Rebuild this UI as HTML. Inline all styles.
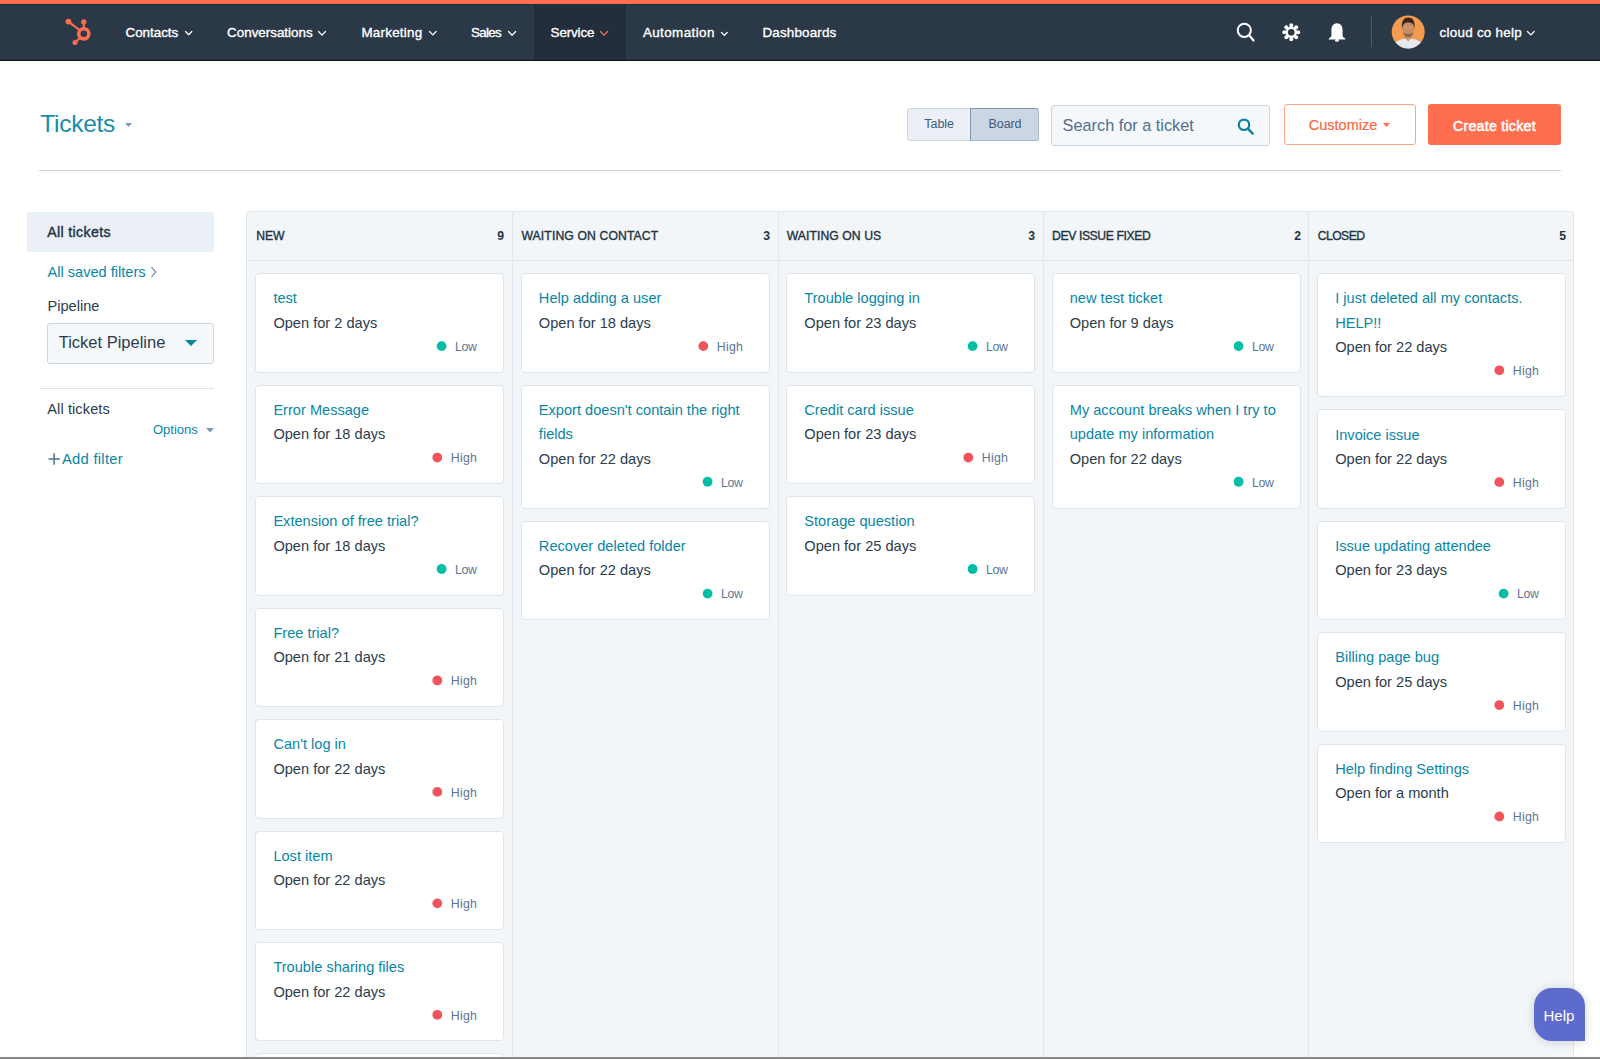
<!DOCTYPE html>
<html><head><meta charset="utf-8">
<style>
*{box-sizing:border-box;margin:0;padding:0}
html,body{width:1600px;height:1059px;overflow:hidden;background:#fff;font-family:"Liberation Sans",sans-serif;color:#33475b}
.a{position:absolute;white-space:nowrap}
.card{background:#fff;border:1px solid #e0e5eb;border-radius:4px}
</style></head><body>
<div class="a" style="left:0px;top:0px;width:1600px;height:3.5px;background:#ff6f4f"></div>
<div class="a" style="left:0px;top:3.5px;width:1600px;height:1px;background:#1f3344"></div>
<div class="a" style="left:0px;top:4.5px;width:1600px;height:55.5px;background:#2b3848"></div>
<div class="a" style="left:534px;top:4.5px;width:91.5px;height:55.5px;background:#222e3c"></div>
<div class="a" style="left:0px;top:60px;width:1600px;height:1px;background:#0d1218"></div>
<svg class="a" style="left:60px;top:14px" width="40" height="36" viewBox="60 14 40 36">
<g fill="#ff6f4f" stroke="none">
<circle cx="68.4" cy="21.6" r="2.9"/>
<circle cx="83.8" cy="21.9" r="2.6"/>
<circle cx="75" cy="42.5" r="2.5"/>
</g>
<g fill="none" stroke="#ff6f4f">
<circle cx="83.8" cy="33.8" r="5.1" stroke-width="3.6"/>
<line x1="68.4" y1="21.6" x2="79.5" y2="30" stroke-width="2"/>
<line x1="83.8" y1="21.9" x2="83.8" y2="28.5" stroke-width="2"/>
<line x1="75" y1="42.5" x2="80" y2="37.8" stroke-width="2"/>
</g></svg>
<span class="a" style="left:125.50px;top:26.06px;font-size:13.4px;line-height:13.4px;color:#fff;font-weight:400;-webkit-text-stroke:0.35px #fff;letter-spacing:-0.011px;">Contacts</span>
<svg class="a" style="left:183.60000000000002px;top:30.49px" width="9.30" height="6.01" viewBox="-1 -1 9.30 6.01"><path d="M0.5 0.5 L3.65 3.71 L6.80 0.5" fill="none" stroke="#fff" stroke-width="1.25" stroke-linecap="round" stroke-linejoin="round"/></svg>
<span class="a" style="left:227.10px;top:26.06px;font-size:13.4px;line-height:13.4px;color:#fff;font-weight:400;-webkit-text-stroke:0.35px #fff;letter-spacing:-0.004px;">Conversations</span>
<svg class="a" style="left:317.3px;top:30.30px" width="10.00" height="6.40" viewBox="-1 -1 10.00 6.40"><path d="M0.5 0.5 L4.00 4.10 L7.50 0.5" fill="none" stroke="#fff" stroke-width="1.25" stroke-linecap="round" stroke-linejoin="round"/></svg>
<span class="a" style="left:361.40px;top:26.06px;font-size:13.4px;line-height:13.4px;color:#fff;font-weight:400;-webkit-text-stroke:0.35px #fff;letter-spacing:0.245px;">Marketing</span>
<svg class="a" style="left:428.0px;top:30.41px" width="9.60" height="6.18" viewBox="-1 -1 9.60 6.18"><path d="M0.5 0.5 L3.80 3.88 L7.10 0.5" fill="none" stroke="#fff" stroke-width="1.25" stroke-linecap="round" stroke-linejoin="round"/></svg>
<span class="a" style="left:471.00px;top:26.06px;font-size:13.4px;line-height:13.4px;color:#fff;font-weight:400;-webkit-text-stroke:0.35px #fff;letter-spacing:-0.678px;">Sales</span>
<svg class="a" style="left:507.0px;top:30.24px" width="10.20" height="6.51" viewBox="-1 -1 10.20 6.51"><path d="M0.5 0.5 L4.10 4.21 L7.70 0.5" fill="none" stroke="#fff" stroke-width="1.25" stroke-linecap="round" stroke-linejoin="round"/></svg>
<span class="a" style="left:550.60px;top:26.06px;font-size:13.4px;line-height:13.4px;color:#fff;font-weight:400;-webkit-text-stroke:0.35px #fff;letter-spacing:-0.132px;">Service</span>
<svg class="a" style="left:598.6999999999999px;top:30.27px" width="10.10" height="6.46" viewBox="-1 -1 10.10 6.46"><path d="M0.5 0.5 L4.05 4.16 L7.60 0.5" fill="none" stroke="#ff6f4f" stroke-width="1.25" stroke-linecap="round" stroke-linejoin="round"/></svg>
<span class="a" style="left:642.90px;top:26.06px;font-size:13.4px;line-height:13.4px;color:#fff;font-weight:400;-webkit-text-stroke:0.35px #fff;letter-spacing:0.412px;">Automation</span>
<svg class="a" style="left:720.0px;top:30.66px" width="8.70" height="5.69" viewBox="-1 -1 8.70 5.69"><path d="M0.5 0.5 L3.35 3.39 L6.20 0.5" fill="none" stroke="#fff" stroke-width="1.25" stroke-linecap="round" stroke-linejoin="round"/></svg>
<span class="a" style="left:762.50px;top:26.06px;font-size:13.4px;line-height:13.4px;color:#fff;font-weight:400;-webkit-text-stroke:0.35px #fff;letter-spacing:0.172px;">Dashboards</span>
<span class="a" style="left:1439.60px;top:26.06px;font-size:13.4px;line-height:13.4px;color:#fff;font-weight:400;-webkit-text-stroke:0.35px #fff;letter-spacing:0.261px;">cloud co help</span>
<svg class="a" style="left:1526.3px;top:30.38px" width="9.70" height="6.24" viewBox="-1 -1 9.70 6.24"><path d="M0.5 0.5 L3.85 3.94 L7.20 0.5" fill="none" stroke="#fff" stroke-width="1.25" stroke-linecap="round" stroke-linejoin="round"/></svg>
<svg class="a" style="left:1230px;top:16px" width="30" height="30" viewBox="1230 16 30 30">
<circle cx="1244.3" cy="30.3" r="6.6" fill="none" stroke="#fff" stroke-width="2"/>
<line x1="1249" y1="35" x2="1253.5" y2="40.5" stroke="#fff" stroke-width="2.2" stroke-linecap="round"/></svg>
<svg class="a" style="left:1278px;top:19px" width="26" height="26" viewBox="1278 19 26 26">
<g fill="#fff"><circle cx="1298.25" cy="32.25" r="1.95"/><circle cx="1296.20" cy="37.20" r="1.95"/><circle cx="1291.25" cy="39.25" r="1.95"/><circle cx="1286.30" cy="37.20" r="1.95"/><circle cx="1284.25" cy="32.25" r="1.95"/><circle cx="1286.30" cy="27.30" r="1.95"/><circle cx="1291.25" cy="25.25" r="1.95"/><circle cx="1296.20" cy="27.30" r="1.95"/></g>
<circle cx="1291.25" cy="32.25" r="4.6" fill="none" stroke="#fff" stroke-width="2.5"/></svg>
<svg class="a" style="left:1326px;top:20px" width="22" height="24" viewBox="1326 20 22 24">
<path fill="#fff" d="M1337 23.2 C1332.6 23.2 1331.4 27 1331.4 30.5 L1331.4 35.5 C1331.4 36.8 1330.2 37.6 1328.8 38.4 L1328.8 39.4 L1345.2 39.4 L1345.2 38.4 C1343.8 37.6 1342.6 36.8 1342.6 35.5 L1342.6 30.5 C1342.6 27 1341.4 23.2 1337 23.2 Z"/>
<ellipse cx="1337" cy="40.3" rx="2" ry="1.5" fill="#fff"/></svg>
<div class="a" style="left:1371px;top:16px;width:1px;height:30.5px;background:#4a5b6e"></div>
<svg class="a" style="left:1391px;top:14.5px" width="34" height="34" viewBox="0 0 34 34">
<defs><clipPath id="av"><circle cx="17.2" cy="16.9" r="16.5"/></clipPath></defs>
<g clip-path="url(#av)">
<rect x="0" y="0" width="34" height="34" fill="#f39c4f"/>
<rect x="13.8" y="18" width="6.8" height="6" fill="#b98058"/>
<path d="M1 30 C6 25.5 11 23.5 17.2 23.2 C23.5 23.5 28.5 25.5 33.5 30 L34 34 L0 34 Z" fill="#e4e9ef"/>
<path d="M14 23.3 L17.2 26.5 L20.4 23.3 Z" fill="#d0a080"/>
<ellipse cx="17.2" cy="13.6" rx="6" ry="7.9" fill="#c98d64"/>
<path d="M11 14 C10 5.5 13.6 2.6 17.4 2.6 C21.2 2.6 24.5 5.2 23.5 14 C23 9.5 21.6 7.5 17.4 7.5 C13.2 7.5 11.7 9.5 11 14 Z" fill="#3b2521"/>
<path d="M12.5 19 C14.5 22.5 20 22.5 22 19 L21.6 17.5 C19.5 19.8 15 19.8 12.9 17.5 Z" fill="#5e3a30" opacity="0.55"/>
<circle cx="15" cy="12.5" r="1.1" fill="#f2a9a0" opacity="0.7"/><circle cx="19.5" cy="12.5" r="1.1" fill="#f2a9a0" opacity="0.7"/>
</g></svg>
<span class="a" style="left:40.25px;top:111.66px;font-size:24.5px;line-height:24.5px;color:#1a8cab;font-weight:400;letter-spacing:-0.264px;">Tickets</span>
<svg class="a" style="left:125.10px;top:122.80px" width="7" height="4" viewBox="0 0 7 4"><path d="M0 0 L7 0 L3.5 4 Z" fill="#7c98b6"/></svg>
<div class="a" style="left:39px;top:170px;width:1522px;height:1px;background:#cbd6e2"></div>
<div class="a" style="left:907px;top:108px;width:132px;height:33px;border:1px solid #cbd6e2;border-radius:3px;background:#eaf0f6"></div>
<div class="a" style="left:970px;top:108px;width:69px;height:33px;border:1px solid #7c98b6;border-radius:0 3px 3px 0;background:#cbd6e2;border-bottom-color:#a9bbd0;border-right-color:#a9bbd0"></div>
<span class="a" style="left:924.20px;top:117.72px;font-size:12.5px;line-height:12.5px;color:#425b76;font-weight:400;">Table</span>
<span class="a" style="left:988.60px;top:117.72px;font-size:12.5px;line-height:12.5px;color:#425b76;font-weight:400;letter-spacing:-0.1px">Board</span>
<div class="a" style="left:1051px;top:105px;width:219px;height:41px;border:1px solid #cbd6e2;border-radius:3px;background:#f5f8fa"></div>
<span class="a" style="left:1062.60px;top:116.80px;font-size:16.3px;line-height:16.3px;color:#516f90;font-weight:400;">Search for a ticket</span>
<svg class="a" style="left:1234px;top:114px" width="24" height="24" viewBox="1234 114 24 24">
<circle cx="1244" cy="124.8" r="5.2" fill="none" stroke="#0582a2" stroke-width="2.2"/>
<line x1="1247.9" y1="128.7" x2="1252.7" y2="133.6" stroke="#0582a2" stroke-width="2.4" stroke-linecap="round"/></svg>
<div class="a" style="left:1283.5px;top:104px;width:132px;height:41px;border:1px solid #ffa38c;border-radius:3px;background:#fff"></div>
<span class="a" style="left:1308.70px;top:117.93px;font-size:14.5px;line-height:14.5px;color:#f76840;font-weight:400;-webkit-text-stroke:0.2px #f76840;letter-spacing:0.013px;">Customize</span>
<svg class="a" style="left:1382.70px;top:123.20px" width="7" height="4" viewBox="0 0 7 4"><path d="M0 0 L7 0 L3.5 4 Z" fill="#ff6f4f"/></svg>
<div class="a" style="left:1428px;top:104px;width:133px;height:41px;background:#ff6f4f;border-radius:3px"></div>
<span class="a" style="left:1453.00px;top:118.58px;font-size:14.2px;line-height:14.2px;color:#fff;font-weight:400;-webkit-text-stroke:0.5px #fff;letter-spacing:0.250px;">Create ticket</span>
<div class="a" style="left:27px;top:211.5px;width:187px;height:40px;background:#eaf0f6;border-radius:3px"></div>
<span class="a" style="left:47.30px;top:224.58px;font-size:14.2px;line-height:14.2px;color:#213343;font-weight:400;-webkit-text-stroke:0.4px #213343;letter-spacing:0.333px;">All tickets</span>
<span class="a" style="left:47.50px;top:264.84px;font-size:14.6px;line-height:14.6px;color:#0786a6;font-weight:400;">All saved filters</span>
<svg class="a" style="left:150px;top:266px" width="8" height="12" viewBox="0 0 8 12"><path d="M1.8 1.5 L5.8 6 L1.8 10.5" fill="none" stroke="#7c98b6" stroke-width="1.3" stroke-linecap="round" stroke-linejoin="round"/></svg>
<span class="a" style="left:47.50px;top:298.84px;font-size:14.6px;line-height:14.6px;color:#2b3c4e;font-weight:400;">Pipeline</span>
<div class="a" style="left:47px;top:323px;width:167px;height:41px;border:1px solid #cbd6e2;border-radius:3px;background:#f5f8fa"></div>
<span class="a" style="left:58.70px;top:333.83px;font-size:16.5px;line-height:16.5px;color:#2b3c4e;font-weight:400;">Ticket Pipeline</span>
<svg class="a" style="left:184.90px;top:340.40px" width="12" height="6" viewBox="0 0 12 6"><path d="M0 0 L12 0 L6.0 6 Z" fill="#0582a2"/></svg>
<div class="a" style="left:39px;top:388px;width:175px;height:1px;background:#dfe3eb"></div>
<span class="a" style="left:47.30px;top:402.04px;font-size:14.6px;line-height:14.6px;color:#2b3c4e;font-weight:400;letter-spacing:0.084px;">All tickets</span>
<span class="a" style="left:153.00px;top:423.20px;font-size:13px;line-height:13px;color:#0786a6;font-weight:400;">Options</span>
<svg class="a" style="left:205.90px;top:428.25px" width="8" height="4.5" viewBox="0 0 8 4.5"><path d="M0 0 L8 0 L4.0 4.5 Z" fill="#7c98b6"/></svg>
<svg class="a" style="left:47px;top:452px" width="14" height="14" viewBox="0 0 14 14">
<path d="M1.5 7 H12.8 M7.1 1.3 V12.8" stroke="#516f90" stroke-width="1.5" fill="none"/></svg>
<span class="a" style="left:62.00px;top:451.67px;font-size:14.8px;line-height:14.8px;color:#0786a6;font-weight:400;letter-spacing:0.255px;">Add filter</span>
<div class="a" style="left:246px;top:211px;width:1328px;height:850px;background:#f2f6f9;border:1px solid #e1e6ec;border-bottom:none;border-radius:3px 3px 0 0"></div>
<div class="a" style="left:246px;top:260px;width:1328px;height:1px;background:#e1e6ec"></div>
<div class="a" style="left:512px;top:211px;width:1px;height:850px;background:#e4e8ee"></div>
<div class="a" style="left:778px;top:211px;width:1px;height:850px;background:#e4e8ee"></div>
<div class="a" style="left:1043px;top:211px;width:1px;height:850px;background:#e4e8ee"></div>
<div class="a" style="left:1308px;top:211px;width:1px;height:850px;background:#e4e8ee"></div>
<span class="a" style="left:256.20px;top:229.77px;font-size:12.2px;line-height:12.2px;color:#213343;font-weight:400;-webkit-text-stroke:0.35px #213343;letter-spacing:-0.081px;">NEW</span>
<span class="a" style="left:463px;top:229.77px;width:41px;text-align:right;font-size:12.2px;line-height:12.2px;color:#213343;font-weight:700">9</span>
<div class="a card" style="left:255px;top:273px;width:249px;height:100px"></div>
<span class="a" style="left:273.40px;top:291.49px;font-size:14.6px;line-height:14.6px;color:#0786a6;font-weight:400;">test</span>
<span class="a" style="left:273.40px;top:315.89px;font-size:14.6px;line-height:14.6px;color:#2b3c4e;font-weight:400;">Open for 2 days</span>
<span class="a" style="left:455.10px;top:340.89px;font-size:12.3px;line-height:12.3px;color:#5a7594;font-weight:400;letter-spacing:-0.448px;">Low</span>
<svg class="a" style="left:436px;top:340px" width="12" height="12"><circle cx="5.60" cy="6.10" r="4.9" fill="#00bda5"/></svg>
<div class="a card" style="left:255px;top:385px;width:249px;height:99px"></div>
<span class="a" style="left:273.40px;top:402.94px;font-size:14.6px;line-height:14.6px;color:#0786a6;font-weight:400;">Error Message</span>
<span class="a" style="left:273.40px;top:427.34px;font-size:14.6px;line-height:14.6px;color:#2b3c4e;font-weight:400;">Open for 18 days</span>
<span class="a" style="left:450.80px;top:452.34px;font-size:12.3px;line-height:12.3px;color:#5a7594;font-weight:400;letter-spacing:0.233px;">High</span>
<svg class="a" style="left:431px;top:452px" width="12" height="12"><circle cx="6.30" cy="5.55" r="4.9" fill="#f2545b"/></svg>
<div class="a card" style="left:255px;top:496px;width:249px;height:100px"></div>
<span class="a" style="left:273.40px;top:514.39px;font-size:14.6px;line-height:14.6px;color:#0786a6;font-weight:400;">Extension of free trial?</span>
<span class="a" style="left:273.40px;top:538.79px;font-size:14.6px;line-height:14.6px;color:#2b3c4e;font-weight:400;">Open for 18 days</span>
<span class="a" style="left:455.10px;top:563.79px;font-size:12.3px;line-height:12.3px;color:#5a7594;font-weight:400;letter-spacing:-0.448px;">Low</span>
<svg class="a" style="left:436px;top:563px" width="12" height="12"><circle cx="5.60" cy="6.00" r="4.9" fill="#00bda5"/></svg>
<div class="a card" style="left:255px;top:608px;width:249px;height:99px"></div>
<span class="a" style="left:273.40px;top:625.84px;font-size:14.6px;line-height:14.6px;color:#0786a6;font-weight:400;">Free trial?</span>
<span class="a" style="left:273.40px;top:650.24px;font-size:14.6px;line-height:14.6px;color:#2b3c4e;font-weight:400;">Open for 21 days</span>
<span class="a" style="left:450.80px;top:675.24px;font-size:12.3px;line-height:12.3px;color:#5a7594;font-weight:400;letter-spacing:0.233px;">High</span>
<svg class="a" style="left:431px;top:675px" width="12" height="12"><circle cx="6.30" cy="5.45" r="4.9" fill="#f2545b"/></svg>
<div class="a card" style="left:255px;top:719px;width:249px;height:100px"></div>
<span class="a" style="left:273.40px;top:737.29px;font-size:14.6px;line-height:14.6px;color:#0786a6;font-weight:400;">Can't log in</span>
<span class="a" style="left:273.40px;top:761.69px;font-size:14.6px;line-height:14.6px;color:#2b3c4e;font-weight:400;">Open for 22 days</span>
<span class="a" style="left:450.80px;top:786.69px;font-size:12.3px;line-height:12.3px;color:#5a7594;font-weight:400;letter-spacing:0.233px;">High</span>
<svg class="a" style="left:431px;top:786px" width="12" height="12"><circle cx="6.30" cy="5.90" r="4.9" fill="#f2545b"/></svg>
<div class="a card" style="left:255px;top:831px;width:249px;height:99px"></div>
<span class="a" style="left:273.40px;top:848.74px;font-size:14.6px;line-height:14.6px;color:#0786a6;font-weight:400;">Lost item</span>
<span class="a" style="left:273.40px;top:873.14px;font-size:14.6px;line-height:14.6px;color:#2b3c4e;font-weight:400;">Open for 22 days</span>
<span class="a" style="left:450.80px;top:898.14px;font-size:12.3px;line-height:12.3px;color:#5a7594;font-weight:400;letter-spacing:0.233px;">High</span>
<svg class="a" style="left:431px;top:898px" width="12" height="12"><circle cx="6.30" cy="5.35" r="4.9" fill="#f2545b"/></svg>
<div class="a card" style="left:255px;top:942px;width:249px;height:99px"></div>
<span class="a" style="left:273.40px;top:960.19px;font-size:14.6px;line-height:14.6px;color:#0786a6;font-weight:400;">Trouble sharing files</span>
<span class="a" style="left:273.40px;top:984.59px;font-size:14.6px;line-height:14.6px;color:#2b3c4e;font-weight:400;">Open for 22 days</span>
<span class="a" style="left:450.80px;top:1009.59px;font-size:12.3px;line-height:12.3px;color:#5a7594;font-weight:400;letter-spacing:0.233px;">High</span>
<svg class="a" style="left:431px;top:1009px" width="12" height="12"><circle cx="6.30" cy="5.80" r="4.9" fill="#f2545b"/></svg>
<div class="a card" style="left:255px;top:1053px;width:249px;height:100px"></div>
<span class="a" style="left:273.40px;top:1071.64px;font-size:14.6px;line-height:14.6px;color:#0786a6;font-weight:400;">Trouble sharing files</span>
<span class="a" style="left:273.40px;top:1096.04px;font-size:14.6px;line-height:14.6px;color:#2b3c4e;font-weight:400;">Open for 22 days</span>
<span class="a" style="left:450.80px;top:1121.04px;font-size:12.3px;line-height:12.3px;color:#5a7594;font-weight:400;letter-spacing:0.233px;">High</span>
<svg class="a" style="left:431px;top:1120px" width="12" height="12"><circle cx="6.30" cy="6.25" r="4.9" fill="#f2545b"/></svg>
<span class="a" style="left:521.40px;top:229.77px;font-size:12.2px;line-height:12.2px;color:#213343;font-weight:400;-webkit-text-stroke:0.35px #213343;letter-spacing:0.125px;">WAITING ON CONTACT</span>
<span class="a" style="left:729px;top:229.77px;width:41px;text-align:right;font-size:12.2px;line-height:12.2px;color:#213343;font-weight:700">3</span>
<div class="a card" style="left:521px;top:273px;width:249px;height:100px"></div>
<span class="a" style="left:538.85px;top:291.49px;font-size:14.6px;line-height:14.6px;color:#0786a6;font-weight:400;">Help adding a user</span>
<span class="a" style="left:538.85px;top:315.89px;font-size:14.6px;line-height:14.6px;color:#2b3c4e;font-weight:400;">Open for 18 days</span>
<span class="a" style="left:716.80px;top:340.89px;font-size:12.3px;line-height:12.3px;color:#5a7594;font-weight:400;letter-spacing:0.233px;">High</span>
<svg class="a" style="left:697px;top:340px" width="12" height="12"><circle cx="6.30" cy="6.10" r="4.9" fill="#f2545b"/></svg>
<div class="a card" style="left:521px;top:385px;width:249px;height:124px"></div>
<span class="a" style="left:538.85px;top:402.94px;font-size:14.6px;line-height:14.6px;color:#0786a6;font-weight:400;">Export doesn't contain the right</span>
<span class="a" style="left:538.85px;top:427.14px;font-size:14.6px;line-height:14.6px;color:#0786a6;font-weight:400;">fields</span>
<span class="a" style="left:538.85px;top:451.54px;font-size:14.6px;line-height:14.6px;color:#2b3c4e;font-weight:400;">Open for 22 days</span>
<span class="a" style="left:721.10px;top:476.54px;font-size:12.3px;line-height:12.3px;color:#5a7594;font-weight:400;letter-spacing:-0.448px;">Low</span>
<svg class="a" style="left:702px;top:476px" width="12" height="12"><circle cx="5.60" cy="5.75" r="4.9" fill="#00bda5"/></svg>
<div class="a card" style="left:521px;top:521px;width:249px;height:99px"></div>
<span class="a" style="left:538.85px;top:538.99px;font-size:14.6px;line-height:14.6px;color:#0786a6;font-weight:400;">Recover deleted folder</span>
<span class="a" style="left:538.85px;top:563.39px;font-size:14.6px;line-height:14.6px;color:#2b3c4e;font-weight:400;">Open for 22 days</span>
<span class="a" style="left:721.10px;top:588.39px;font-size:12.3px;line-height:12.3px;color:#5a7594;font-weight:400;letter-spacing:-0.448px;">Low</span>
<svg class="a" style="left:702px;top:588px" width="12" height="12"><circle cx="5.60" cy="5.60" r="4.9" fill="#00bda5"/></svg>
<span class="a" style="left:786.75px;top:229.77px;font-size:12.2px;line-height:12.2px;color:#213343;font-weight:400;-webkit-text-stroke:0.35px #213343;letter-spacing:0.062px;">WAITING ON US</span>
<span class="a" style="left:994px;top:229.77px;width:41px;text-align:right;font-size:12.2px;line-height:12.2px;color:#213343;font-weight:700">3</span>
<div class="a card" style="left:786px;top:273px;width:249px;height:100px"></div>
<span class="a" style="left:804.30px;top:291.49px;font-size:14.6px;line-height:14.6px;color:#0786a6;font-weight:400;">Trouble logging in</span>
<span class="a" style="left:804.30px;top:315.89px;font-size:14.6px;line-height:14.6px;color:#2b3c4e;font-weight:400;">Open for 23 days</span>
<span class="a" style="left:986.10px;top:340.89px;font-size:12.3px;line-height:12.3px;color:#5a7594;font-weight:400;letter-spacing:-0.448px;">Low</span>
<svg class="a" style="left:967px;top:340px" width="12" height="12"><circle cx="5.60" cy="6.10" r="4.9" fill="#00bda5"/></svg>
<div class="a card" style="left:786px;top:385px;width:249px;height:99px"></div>
<span class="a" style="left:804.30px;top:402.94px;font-size:14.6px;line-height:14.6px;color:#0786a6;font-weight:400;">Credit card issue</span>
<span class="a" style="left:804.30px;top:427.34px;font-size:14.6px;line-height:14.6px;color:#2b3c4e;font-weight:400;">Open for 23 days</span>
<span class="a" style="left:981.80px;top:452.34px;font-size:12.3px;line-height:12.3px;color:#5a7594;font-weight:400;letter-spacing:0.233px;">High</span>
<svg class="a" style="left:962px;top:452px" width="12" height="12"><circle cx="6.30" cy="5.55" r="4.9" fill="#f2545b"/></svg>
<div class="a card" style="left:786px;top:496px;width:249px;height:100px"></div>
<span class="a" style="left:804.30px;top:514.39px;font-size:14.6px;line-height:14.6px;color:#0786a6;font-weight:400;">Storage question</span>
<span class="a" style="left:804.30px;top:538.79px;font-size:14.6px;line-height:14.6px;color:#2b3c4e;font-weight:400;">Open for 25 days</span>
<span class="a" style="left:986.10px;top:563.79px;font-size:12.3px;line-height:12.3px;color:#5a7594;font-weight:400;letter-spacing:-0.448px;">Low</span>
<svg class="a" style="left:967px;top:563px" width="12" height="12"><circle cx="5.60" cy="6.00" r="4.9" fill="#00bda5"/></svg>
<span class="a" style="left:1052.10px;top:229.77px;font-size:12.2px;line-height:12.2px;color:#213343;font-weight:400;-webkit-text-stroke:0.35px #213343;letter-spacing:-0.408px;">DEV ISSUE FIXED</span>
<span class="a" style="left:1260px;top:229.77px;width:41px;text-align:right;font-size:12.2px;line-height:12.2px;color:#213343;font-weight:700">2</span>
<div class="a card" style="left:1052px;top:273px;width:249px;height:100px"></div>
<span class="a" style="left:1069.75px;top:291.49px;font-size:14.6px;line-height:14.6px;color:#0786a6;font-weight:400;">new test ticket</span>
<span class="a" style="left:1069.75px;top:315.89px;font-size:14.6px;line-height:14.6px;color:#2b3c4e;font-weight:400;">Open for 9 days</span>
<span class="a" style="left:1252.10px;top:340.89px;font-size:12.3px;line-height:12.3px;color:#5a7594;font-weight:400;letter-spacing:-0.448px;">Low</span>
<svg class="a" style="left:1233px;top:340px" width="12" height="12"><circle cx="5.60" cy="6.10" r="4.9" fill="#00bda5"/></svg>
<div class="a card" style="left:1052px;top:385px;width:249px;height:124px"></div>
<span class="a" style="left:1069.75px;top:402.94px;font-size:14.6px;line-height:14.6px;color:#0786a6;font-weight:400;">My account breaks when I try to</span>
<span class="a" style="left:1069.75px;top:427.14px;font-size:14.6px;line-height:14.6px;color:#0786a6;font-weight:400;">update my information</span>
<span class="a" style="left:1069.75px;top:451.54px;font-size:14.6px;line-height:14.6px;color:#2b3c4e;font-weight:400;">Open for 22 days</span>
<span class="a" style="left:1252.10px;top:476.54px;font-size:12.3px;line-height:12.3px;color:#5a7594;font-weight:400;letter-spacing:-0.448px;">Low</span>
<svg class="a" style="left:1233px;top:476px" width="12" height="12"><circle cx="5.60" cy="5.75" r="4.9" fill="#00bda5"/></svg>
<span class="a" style="left:1317.70px;top:229.77px;font-size:12.2px;line-height:12.2px;color:#213343;font-weight:400;-webkit-text-stroke:0.35px #213343;letter-spacing:-0.553px;">CLOSED</span>
<span class="a" style="left:1525px;top:229.77px;width:41px;text-align:right;font-size:12.2px;line-height:12.2px;color:#213343;font-weight:700">5</span>
<div class="a card" style="left:1317px;top:273px;width:249px;height:124px"></div>
<span class="a" style="left:1335.20px;top:291.49px;font-size:14.6px;line-height:14.6px;color:#0786a6;font-weight:400;">I just deleted all my contacts.</span>
<span class="a" style="left:1335.20px;top:315.69px;font-size:14.6px;line-height:14.6px;color:#0786a6;font-weight:400;">HELP!!</span>
<span class="a" style="left:1335.20px;top:340.09px;font-size:14.6px;line-height:14.6px;color:#2b3c4e;font-weight:400;">Open for 22 days</span>
<span class="a" style="left:1512.80px;top:365.09px;font-size:12.3px;line-height:12.3px;color:#5a7594;font-weight:400;letter-spacing:0.233px;">High</span>
<svg class="a" style="left:1493px;top:364px" width="12" height="12"><circle cx="6.30" cy="6.30" r="4.9" fill="#f2545b"/></svg>
<div class="a card" style="left:1317px;top:409px;width:249px;height:100px"></div>
<span class="a" style="left:1335.20px;top:427.54px;font-size:14.6px;line-height:14.6px;color:#0786a6;font-weight:400;">Invoice issue</span>
<span class="a" style="left:1335.20px;top:451.94px;font-size:14.6px;line-height:14.6px;color:#2b3c4e;font-weight:400;">Open for 22 days</span>
<span class="a" style="left:1512.80px;top:476.94px;font-size:12.3px;line-height:12.3px;color:#5a7594;font-weight:400;letter-spacing:0.233px;">High</span>
<svg class="a" style="left:1493px;top:476px" width="12" height="12"><circle cx="6.30" cy="6.15" r="4.9" fill="#f2545b"/></svg>
<div class="a card" style="left:1317px;top:521px;width:249px;height:99px"></div>
<span class="a" style="left:1335.20px;top:538.99px;font-size:14.6px;line-height:14.6px;color:#0786a6;font-weight:400;">Issue updating attendee</span>
<span class="a" style="left:1335.20px;top:563.39px;font-size:14.6px;line-height:14.6px;color:#2b3c4e;font-weight:400;">Open for 23 days</span>
<span class="a" style="left:1517.10px;top:588.39px;font-size:12.3px;line-height:12.3px;color:#5a7594;font-weight:400;letter-spacing:-0.448px;">Low</span>
<svg class="a" style="left:1498px;top:588px" width="12" height="12"><circle cx="5.60" cy="5.60" r="4.9" fill="#00bda5"/></svg>
<div class="a card" style="left:1317px;top:632px;width:249px;height:100px"></div>
<span class="a" style="left:1335.20px;top:650.44px;font-size:14.6px;line-height:14.6px;color:#0786a6;font-weight:400;">Billing page bug</span>
<span class="a" style="left:1335.20px;top:674.84px;font-size:14.6px;line-height:14.6px;color:#2b3c4e;font-weight:400;">Open for 25 days</span>
<span class="a" style="left:1512.80px;top:699.84px;font-size:12.3px;line-height:12.3px;color:#5a7594;font-weight:400;letter-spacing:0.233px;">High</span>
<svg class="a" style="left:1493px;top:699px" width="12" height="12"><circle cx="6.30" cy="6.05" r="4.9" fill="#f2545b"/></svg>
<div class="a card" style="left:1317px;top:744px;width:249px;height:99px"></div>
<span class="a" style="left:1335.20px;top:761.89px;font-size:14.6px;line-height:14.6px;color:#0786a6;font-weight:400;">Help finding Settings</span>
<span class="a" style="left:1335.20px;top:786.29px;font-size:14.6px;line-height:14.6px;color:#2b3c4e;font-weight:400;">Open for a month</span>
<span class="a" style="left:1512.80px;top:811.29px;font-size:12.3px;line-height:12.3px;color:#5a7594;font-weight:400;letter-spacing:0.233px;">High</span>
<svg class="a" style="left:1493px;top:811px" width="12" height="12"><circle cx="6.30" cy="5.50" r="4.9" fill="#f2545b"/></svg>
<div class="a" style="left:1534px;top:988px;width:51px;height:52.5px;background:#5c6bcc;border-radius:18px 18px 0 18px;box-shadow:0 1px 10px rgba(45,62,80,0.2)"></div>
<span class="a" style="left:1543.50px;top:1008.30px;font-size:15px;line-height:15px;color:#fff;font-weight:400;">Help</span>
<div class="a" style="left:0px;top:1056.5px;width:1600px;height:3px;background:#878787"></div>
</body></html>
